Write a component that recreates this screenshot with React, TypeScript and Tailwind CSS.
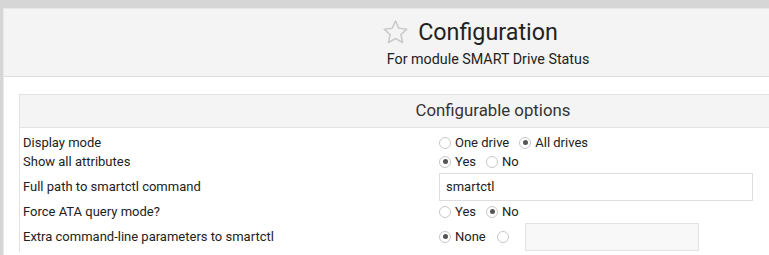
import React from "react";

function Radio({ checked, label, mr = "mr-[10px]" }: { checked?: boolean; label?: string; mr?: string }) {
  return (
    <span className={`inline-flex items-center ${mr}`}>
      <span className="w-[12px] h-[12px] rounded-full border border-[#c8c8c8] bg-white flex items-center justify-center">
        {checked && <span className="w-[5px] h-[5px] rounded-full bg-[#555]" />}
      </span>
      {label && <span className="ml-[4px]">{label}</span>}
    </span>
  );
}

function Row({ label, children, tall }: { label: string; children: React.ReactNode; tall?: boolean }) {
  return (
    <div className={`flex items-center ${tall ? "h-[31px]" : "h-[19px]"}`}>
      <div className="w-[419px] pl-[3px] shrink-0">{label}</div>
      <div className="flex items-center">{children}</div>
    </div>
  );
}

export default function App() {
  return (
    <div
      className="w-[972px] h-[255px] bg-[#d6d6d6] pt-[8px] pl-[3px] overflow-hidden text-[#333]"
      style={{ fontFamily: "Roboto, 'Liberation Sans', sans-serif" }}
    >
      <div className="bg-white h-full border-l border-t border-[#e8e8e8]">
        <div className="h-[68px] bg-[#f4f4f4] border-b border-[#dcdcdc] flex flex-col items-center pt-[8px]">
          <div className="relative">
            <svg
              width="27"
              height="27"
              viewBox="0 0 24 24"
              className="absolute left-[-36px] top-[2px]"
            >
              <path
                d="M12 1.8l3 6.5 7 .8-5.2 4.8 1.5 7-6.3-3.6-6.3 3.6 1.5-7L2 9.1l7-.8z"
                fill="none"
                stroke="#cacaca"
                strokeWidth="1.4"
                strokeLinejoin="round"
              />
            </svg>
            <span className="text-[23.3px] leading-[30px] text-[#222]">Configuration</span>
          </div>
          <div className="text-[14.3px] leading-[18px] mt-[3px] text-[#222]">For module SMART Drive Status</div>
        </div>
        <div className="pl-[15px] pt-[17px]">
          <div className="w-[947px] border-l border-t border-[#e3e3e3]">
            <div className="h-[33px] bg-[#f4f4f4] border-b border-[#e3e3e3] flex items-center justify-center text-[16.8px] text-[#333]">
              Configurable options
            </div>
            <div className="pt-[5px] text-[13px] text-[#222]">
              <Row label="Display mode">
                <Radio label="One drive" />
                <Radio checked label="All drives" />
              </Row>
              <Row label="Show all attributes">
                <Radio checked label="Yes" />
                <Radio label="No" />
              </Row>
              <Row label="Full path to smartctl command" tall>
                <div className="w-[314px] h-[28px] border border-[#dedede] bg-white flex items-center pl-[6px]">
                  smartctl
                </div>
              </Row>
              <Row label="Force ATA query mode?">
                <Radio label="Yes" />
                <Radio checked label="No" />
              </Row>
              <Row label="Extra command-line parameters to smartctl" tall>
                <Radio checked label="None" mr="mr-[11px]" />
                <Radio mr="mr-[16px]" />
                <div className="w-[174px] h-[28px] border border-[#e3e3e3] bg-[#f8f8f8]" />
              </Row>
            </div>
          </div>
        </div>
      </div>
    </div>
  );
}
